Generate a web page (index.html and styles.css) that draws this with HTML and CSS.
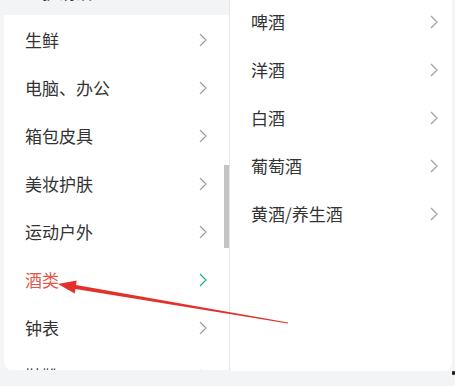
FILE: index.html
```html
<!DOCTYPE html>
<html lang="zh-CN">
<head>
<meta charset="utf-8">
<link rel="stylesheet" href="styles.css">
</head>
<body>
<div class="screen">
  <div class="left-col">
    <div class="header"><div class="row header-row"><span>个护清洁</span></div></div>
    <div class="left-panel">
      <div class="row"><span>生鲜</span><svg class="chev" viewBox="0 0 8 14"><path d="M1 1 L7 7 L1 13"/></svg></div>
      <div class="row"><span>电脑、办公</span><svg class="chev" viewBox="0 0 8 14"><path d="M1 1 L7 7 L1 13"/></svg></div>
      <div class="row"><span>箱包皮具</span><svg class="chev" viewBox="0 0 8 14"><path d="M1 1 L7 7 L1 13"/></svg></div>
      <div class="row"><span>美妆护肤</span><svg class="chev" viewBox="0 0 8 14"><path d="M1 1 L7 7 L1 13"/></svg></div>
      <div class="row"><span>运动户外</span><svg class="chev" viewBox="0 0 8 14"><path d="M1 1 L7 7 L1 13"/></svg></div>
      <div class="row active"><span>酒类</span><svg class="chev" viewBox="0 0 8 14"><path d="M1 1 L7 7 L1 13"/></svg></div>
      <div class="row"><span>钟表</span><svg class="chev" viewBox="0 0 8 14"><path d="M1 1 L7 7 L1 13"/></svg></div>
      <div class="row"><span>鞋靴</span><svg class="chev" viewBox="0 0 8 14"><path d="M1 1 L7 7 L1 13"/></svg></div>
      <div class="scrollbar"></div>
    </div>
  </div>
  <div class="right-panel">
    <div class="row"><span>啤酒</span><svg class="chev" viewBox="0 0 8 14"><path d="M1 1 L7 7 L1 13"/></svg></div>
    <div class="row"><span>洋酒</span><svg class="chev" viewBox="0 0 8 14"><path d="M1 1 L7 7 L1 13"/></svg></div>
    <div class="row"><span>白酒</span><svg class="chev" viewBox="0 0 8 14"><path d="M1 1 L7 7 L1 13"/></svg></div>
    <div class="row"><span>葡萄酒</span><svg class="chev" viewBox="0 0 8 14"><path d="M1 1 L7 7 L1 13"/></svg></div>
    <div class="row"><span>黄酒/养生酒</span><svg class="chev" viewBox="0 0 8 14"><path d="M1 1 L7 7 L1 13"/></svg></div>
  </div>
  <svg class="arrow" viewBox="0 0 455 386" width="455" height="386">
    <polygon points="58,284 76.7,280.6 76,285 288,322.6 288,323.4 75.4,289 74.7,293.4"/>
  </svg>
  <div class="dot"></div>
</div>
</body>
</html>
```
FILE: styles.css
```css
html, body {
  margin: 0;
  padding: 0;
}
body {
  width: 455px;
  height: 386px;
  overflow: hidden;
  background: #f3f4f5;
  font-family: "Noto Sans CJK SC", "Noto Sans", sans-serif;
  font-size: 17px;
  color: #333;
}
.screen {
  position: relative;
  display: flex;
  width: 455px;
  height: 386px;
}
.left-col {
  width: 229px;
  display: flex;
  flex-direction: column;
}
.header {
  height: 15px;
  overflow: hidden;
  background: #f3f4f5;
}
.header-row {
  margin-top: -32px;
  padding-left: 25px;
}
.left-panel {
  position: relative;
  margin-left: 4px;
  height: 355px;
  background: #fff;
  border-bottom-left-radius: 8px;
  overflow: hidden;
}
.row {
  height: 48px;
  display: flex;
  align-items: center;
  justify-content: space-between;
  line-height: 48px;
  white-space: nowrap;
}
.left-panel .row {
  padding-left: 21px;
  padding-right: 22px;
  margin-top: 0;
}
.left-panel .row:first-child {
  margin-top: 1px;
}
.chev {
  width: 8px;
  height: 14px;
  flex: none;
}
.chev path {
  fill: none;
  stroke: #a0a0a0;
  stroke-width: 1.2;
}
.row.active span {
  color: #e4574b;
}
.row.active .chev path {
  stroke: #27b07a;
}
.scrollbar {
  position: absolute;
  left: 220px;
  top: 150px;
  width: 5px;
  height: 83px;
  background: #c4c4c4;
}
.right-panel {
  flex: 1;
  margin-right: 3px;
  height: 371px;
  background: #fff;
  border-left: 1px solid #e6e6e6;
  border-bottom-right-radius: 8px;
  box-sizing: border-box;
  padding-top: 0;
}
.right-panel .row {
  padding-left: 21px;
  padding-right: 14px;
}
.right-panel .row:first-child {
  margin-top: -2px;
}
.arrow {
  position: absolute;
  left: 0;
  top: 0;
  pointer-events: none;
}
.arrow polygon {
  fill: #e3302a;
}
.dot {
  position: absolute;
  left: 452px;
  top: 371px;
  width: 3px;
  height: 4px;
  background: #222;
  border-radius: 1px;
}
```
